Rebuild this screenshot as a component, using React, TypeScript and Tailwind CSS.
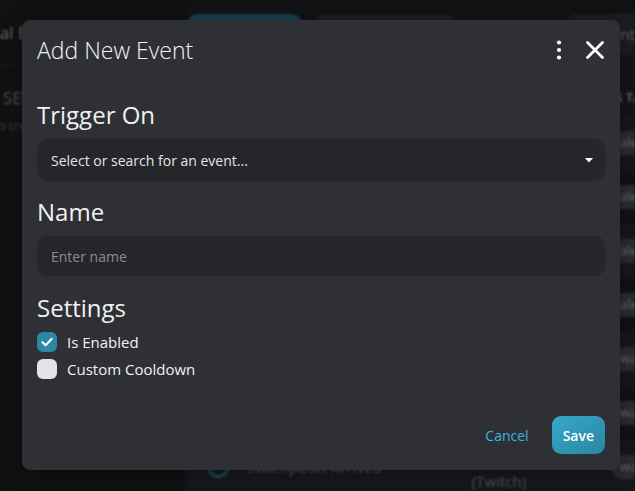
import { Check } from "lucide-react";

const ROWS = [
  { name: "Follow Alert", trigger: "Follow (Twitch)", tag: "alerts" },
  { name: "Sub Alert", trigger: "Sub (Twitch)", tag: "alerts" },
  { name: "Raid Alert", trigger: "Raid (Twitch)", tag: "alerts" },
  { name: "Cheer Alert", trigger: "Cheer (Twitch)", tag: "alerts" },
  { name: "Lurker Arrived", trigger: "Viewer Arrived (Twitch)", tag: "walk-ons" },
  { name: "Mod Arrived", trigger: "Viewer Arrived (Twitch)", tag: "walk-ons" },
  { name: "Swampbutt Arrived", trigger: "Viewer Arrived (Twitch)", tag: "walk-ons" },
];

function Background() {
  return (
    <div className="flex h-[491px] w-[635px] overflow-hidden bg-[#151617] blur-[1px]">
      {/* Sidebar */}
      <aside className="w-[187px] shrink-0 overflow-hidden bg-[#161818]">
        <div className="border-b border-[#26282a] pb-[18px] pt-[20px]">
          <p className="-ml-[49px] whitespace-nowrap text-[17px] text-[#8c8e90]">General Events</p>
        </div>
        <p className="mt-[20px] ml-[3px] whitespace-nowrap text-[17px] text-[#6f7173]">SETTINGS</p>
        <p className="mt-[7px] -ml-[31px] whitespace-nowrap text-[12px] text-[#55575a]">Events created here</p>
      </aside>

      {/* Main */}
      <main className="flex min-w-0 flex-1 flex-col overflow-hidden bg-[#17181b]">
        <div className="flex shrink-0 gap-[12px] pt-[14px]">
          <div className="h-[40px] w-[115px] shrink-0 rounded-t-[10px] bg-[#1d5563]" />
          <div className="h-[40px] w-[143px] shrink-0 rounded-t-[10px] bg-[#26272b]" />
          <div className="ml-[97px] flex h-[40px] w-[120px] shrink-0 items-center rounded-t-[10px] bg-[#26272b] pl-[30px] text-[15px] text-[#8a8b8e]">
            Event Sets
          </div>
        </div>
        <div className="flex flex-1 flex-col bg-[#1c1d21]">
          <div className="flex h-[62px] shrink-0 items-end pb-[9px] text-[12px] font-bold text-[#7c7e82]">
            <span className="ml-[60px] w-[186px] shrink-0">NAME</span>
            <span className="w-[132px] shrink-0 text-center">TRIGGER</span>
            <span className="ml-[46px] shrink-0 whitespace-nowrap pl-[2px]">⇅ TAGS</span>
          </div>
          {ROWS.map((row, i) => (
            <div
              key={row.name}
              className={`flex h-[54px] shrink-0 items-center ${i % 2 === 0 ? "bg-[#1f2024]" : "bg-[#18191c]"}`}
            >
              <span className="ml-[20px] flex h-[22px] w-[22px] shrink-0 items-center justify-center rounded-full border-[3px] border-[#1f6b80]">
                <Check size={12} strokeWidth={3} className="text-[#1f6b80]" />
              </span>
              <span className="ml-[18px] w-[186px] shrink-0 whitespace-nowrap text-[15px] text-[#6e7074]">{row.name}</span>
              <span className="mt-[8px] w-[132px] shrink-0 text-center text-[15px] leading-[20px] text-[#6e7074]">{row.trigger}</span>
              <span className="ml-[46px] shrink-0 whitespace-nowrap rounded-full bg-[#3a3b3f] px-[9px] py-[2px] text-[13px] text-[#8c8d90]">
                {row.tag}
              </span>
            </div>
          ))}
        </div>
      </main>
    </div>
  );
}

function Checkbox({ label, checked }: { label: string; checked?: boolean }) {
  return (
    <label className="flex h-[20px] items-center gap-[10px]">
      <span
        className={`flex h-[20px] w-[20px] items-center justify-center rounded-[6px] ${checked ? "bg-[#2a8aa6]" : "bg-[#e4e4e5]"}`}
      >
        {checked && (
          <svg width="20" height="20" viewBox="0 0 20 20" fill="none">
            <path d="M5.5 10.2 8.6 13.2 14.6 7" stroke="#fff" strokeWidth="2.2" strokeLinecap="round" strokeLinejoin="round" />
          </svg>
        )}
      </span>
      <span className="text-[15px] leading-[20px] text-[#f1f1f2]">{label}</span>
    </label>
  );
}

export default function App() {
  return (
    <div className="relative h-[491px] w-[635px] overflow-hidden bg-[#161718] font-['Open_Sans',sans-serif]">
      <Background />
      <div className="absolute inset-0 bg-black/25" />

      {/* Dialog */}
      <div className="absolute left-[22px] top-[20px] flex h-[450px] w-[598px] flex-col rounded-[8px] bg-[#2f3035] px-[15px] pb-[16px] pt-[14px] shadow-[0_4px_20px_rgba(0,0,0,0.35)]">
        <header className="flex h-[32px] items-center justify-between">
          <h1 className="text-[23px] font-light leading-[32px] text-[#f4f4f5]">Add New Event</h1>
          <div className="flex items-center gap-[22px]">
            <svg width="8" height="22" viewBox="0 0 8 22" fill="#fff">
              <circle cx="4" cy="3.5" r="2.1" />
              <circle cx="4" cy="11" r="2.1" />
              <circle cx="4" cy="18.5" r="2.1" />
            </svg>
            <svg width="20" height="20" viewBox="0 0 20 20" fill="none">
              <path d="M2.5 2.5 17.5 17.5M17.5 2.5 2.5 17.5" stroke="#fff" strokeWidth="2.8" strokeLinecap="round" />
            </svg>
          </div>
        </header>

        <section className="mt-[33px]">
          <h2 className="mb-[8px] text-[24px] leading-[32px] text-[#f1f1f2]">Trigger On</h2>
          <div className="flex h-[42px] items-center justify-between rounded-[10px] bg-[#25262a] pl-[14px] pr-[12px]">
            <span className="text-[14px] text-[#e4e4e6]">Select or search for an event...</span>
            <svg width="8" height="5" viewBox="0 0 8 5" fill="#fff">
              <path d="M0 0h8L4 4.5z" />
            </svg>
          </div>
        </section>

        <section className="mt-[15px]">
          <h2 className="mb-[8px] text-[24px] leading-[32px] text-[#f1f1f2]">Name</h2>
          <input
            placeholder="Enter name"
            className="h-[40px] w-full rounded-[10px] bg-[#25262a] px-[14px] text-[14px] text-[#e4e4e6] outline-none placeholder:text-[#8b8c90]"
          />
        </section>

        <section className="mt-[16px]">
          <h2 className="mb-[8px] text-[24px] leading-[32px] text-[#f1f1f2]">Settings</h2>
          <div className="flex flex-col gap-[7px]">
            <Checkbox label="Is Enabled" checked />
            <Checkbox label="Custom Cooldown" />
          </div>
        </section>

        <footer className="mt-auto flex items-center justify-end gap-[23px]">
          <button className="text-[14px] text-[#3db3de]">Cancel</button>
          <button className="h-[38px] rounded-[9px] bg-linear-to-br from-[#37a8cb] to-[#2a86a3] px-[11px] text-[14px] font-semibold text-white">
            Save
          </button>
        </footer>
      </div>
    </div>
  );
}
